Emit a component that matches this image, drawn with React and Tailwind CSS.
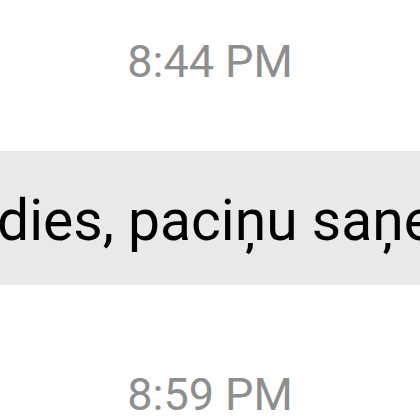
export default function App() {
  return (
    <div className="w-[420px] h-[420px] overflow-hidden bg-white flex flex-col" style={{ fontFamily: "Roboto, 'Liberation Sans', sans-serif" }}>
      <div className="mt-[39px] text-center text-[45px] leading-none text-[#8e8e8e]">8:44 PM</div>
      <div className="mt-[67px] bg-[#e9e9e9] pt-[41px] pb-[36px] overflow-hidden">
        <div className="ml-[-3px] whitespace-nowrap text-[57px] leading-none text-black">dies, paciņu saņemšanai</div>
      </div>
      <div className="mt-[87px] text-center text-[45px] leading-none text-[#8e8e8e]">8:59 PM</div>
    </div>
  );
}
